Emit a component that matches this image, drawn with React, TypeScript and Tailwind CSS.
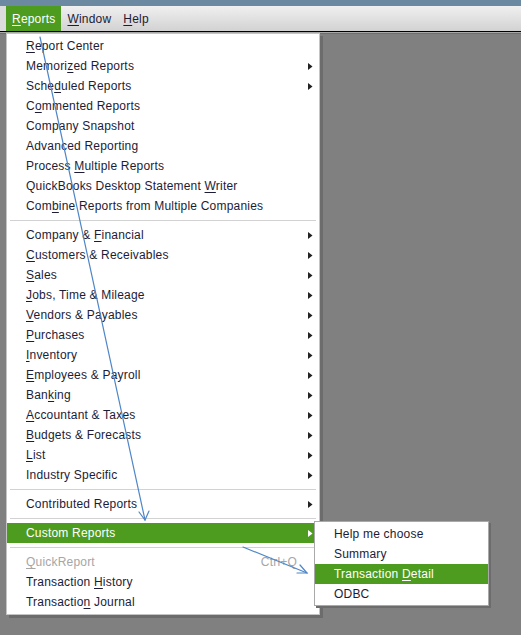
import React from "react";

type Item =
  | { kind: "item"; label: string; sub?: boolean; shortcut?: string; disabled?: boolean; active?: boolean }
  | { kind: "sep" };

// "_" marks the mnemonic letter that gets underlined
const REPORT_ITEMS: Item[] = [
  { kind: "item", label: "_Report Center" },
  { kind: "item", label: "Memori_zed Reports", sub: true },
  { kind: "item", label: "Sche_duled Reports", sub: true },
  { kind: "item", label: "C_ommented Reports" },
  { kind: "item", label: "Company Snapshot" },
  { kind: "item", label: "Advanced Reporting" },
  { kind: "item", label: "Process _Multiple Reports" },
  { kind: "item", label: "QuickBooks Desktop Statement _Writer" },
  { kind: "item", label: "Com_bine Reports from Multiple Companies" },
  { kind: "sep" },
  { kind: "item", label: "Company & _Financial", sub: true },
  { kind: "item", label: "_Customers & Receivables", sub: true },
  { kind: "item", label: "_Sales", sub: true },
  { kind: "item", label: "_Jobs, Time & Mileage", sub: true },
  { kind: "item", label: "_Vendors & Payables", sub: true },
  { kind: "item", label: "_Purchases", sub: true },
  { kind: "item", label: "_Inventory", sub: true },
  { kind: "item", label: "_Employees & Payroll", sub: true },
  { kind: "item", label: "Ban_king", sub: true },
  { kind: "item", label: "_Accountant & Taxes", sub: true },
  { kind: "item", label: "_Budgets & Forecasts", sub: true },
  { kind: "item", label: "_List", sub: true },
  { kind: "item", label: "Industry Specific", sub: true },
  { kind: "sep" },
  { kind: "item", label: "Contributed Reports", sub: true },
  { kind: "sep" },
  { kind: "item", label: "Custom Reports", sub: true, active: true },
  { kind: "sep" },
  { kind: "item", label: "_QuickReport", shortcut: "Ctrl+Q", disabled: true },
  { kind: "item", label: "Transaction _History" },
  { kind: "item", label: "Transactio_n Journal" },
];

const CUSTOM_ITEMS: Item[] = [
  { kind: "item", label: "Help me choose" },
  { kind: "item", label: "Summary" },
  { kind: "item", label: "Transaction _Detail", active: true },
  { kind: "item", label: "ODBC" },
];

function Label({ text }: { text: string }) {
  const i = text.indexOf("_");
  if (i < 0) return <span>{text}</span>;
  return (
    <span>
      {text.slice(0, i)}
      <span className="underline decoration-1 underline-offset-2">{text[i + 1]}</span>
      {text.slice(i + 2)}
    </span>
  );
}

function SubArrow({ light }: { light?: boolean }) {
  return (
    <svg width="5" height="7" viewBox="0 0 5 7" className="shrink-0">
      <path d="M0 0 L4.5 3.5 L0 7 Z" fill={light ? "#ffffff" : "#222222"} />
    </svg>
  );
}

function MenuRows({ items }: { items: Item[] }) {
  return (
    <>
      {items.map((it, idx) =>
        it.kind === "sep" ? (
          <div key={idx} className="h-[9px] flex items-center px-[3px]">
            <div className="h-px w-full bg-[#d2d2d2]" />
          </div>
        ) : (
          <div
            key={idx}
            className={`h-5 flex items-center justify-between pl-[19px] pr-[6px] ${
              it.active
                ? "bg-[#4e9c1f] text-white"
                : it.disabled
                  ? "text-[#a6a6a6]"
                  : "text-[#1c1c36]"
            }`}
          >
            <Label text={it.label} />
            {it.sub && <SubArrow light={it.active} />}
            {it.shortcut && <span className="pr-[16px]">{it.shortcut}</span>}
          </div>
        )
      )}
    </>
  );
}

export default function App() {
  return (
    <div
      className="relative w-[521px] h-[635px] overflow-hidden bg-[#808080] text-[12px] leading-none tracking-[0.2px]"
      style={{ fontFamily: '"Liberation Sans", Arial, sans-serif' }}
    >
      {/* title strip */}
      <div className="h-[6px] bg-[#6b8aa2]" />

      {/* menu bar */}
      <div className="h-[26px] flex items-stretch bg-gradient-to-b from-[#f0f0f0] to-[#d2d2d2] border-b border-black">
        <div className="w-[6px] bg-[#dcdcdc]" />
        <div className="px-[6px] pt-px flex items-center bg-[#4e9c1f] text-white">
          <Label text="_Reports" />
        </div>
        <div className="px-[6px] pt-px flex items-center text-[#1c1c36]">
          <Label text="_Window" />
        </div>
        <div className="px-[6px] pt-px flex items-center text-[#1c1c36]">
          <Label text="_Help" />
        </div>
      </div>
      <div className="h-px bg-[#a8a8a8]" />
      <div className="h-px bg-[#6e6e6e]" />

      {/* Reports dropdown */}
      <div className="absolute left-[6px] top-[33px] w-[314px] bg-white border border-[#c4c4c4] pt-[2px] pb-[2px] shadow-[3px_3px_0_0_#6c6c6c]">
        <MenuRows items={REPORT_ITEMS} />
      </div>

      {/* Custom Reports submenu */}
      <div className="absolute left-[314px] top-[521px] w-[175px] bg-white border border-[#a9a9a9] pt-[2px] pb-[1px] shadow-[2px_2px_0_0_#6c6c6c]">
        <MenuRows items={CUSTOM_ITEMS} />
      </div>

      {/* pointer annotations */}
      <svg className="absolute inset-0 pointer-events-none" width="521" height="635">
        <g stroke="#4f86c8" strokeWidth="1.2" fill="none" strokeLinecap="round">
          <path d="M40 37 L145 520" />
          <path d="M139 512 L145 520 L149 511" />
          <path d="M243 547 L307 573" />
          <path d="M297 573 L307 573 L300 565" />
        </g>
      </svg>
    </div>
  );
}
